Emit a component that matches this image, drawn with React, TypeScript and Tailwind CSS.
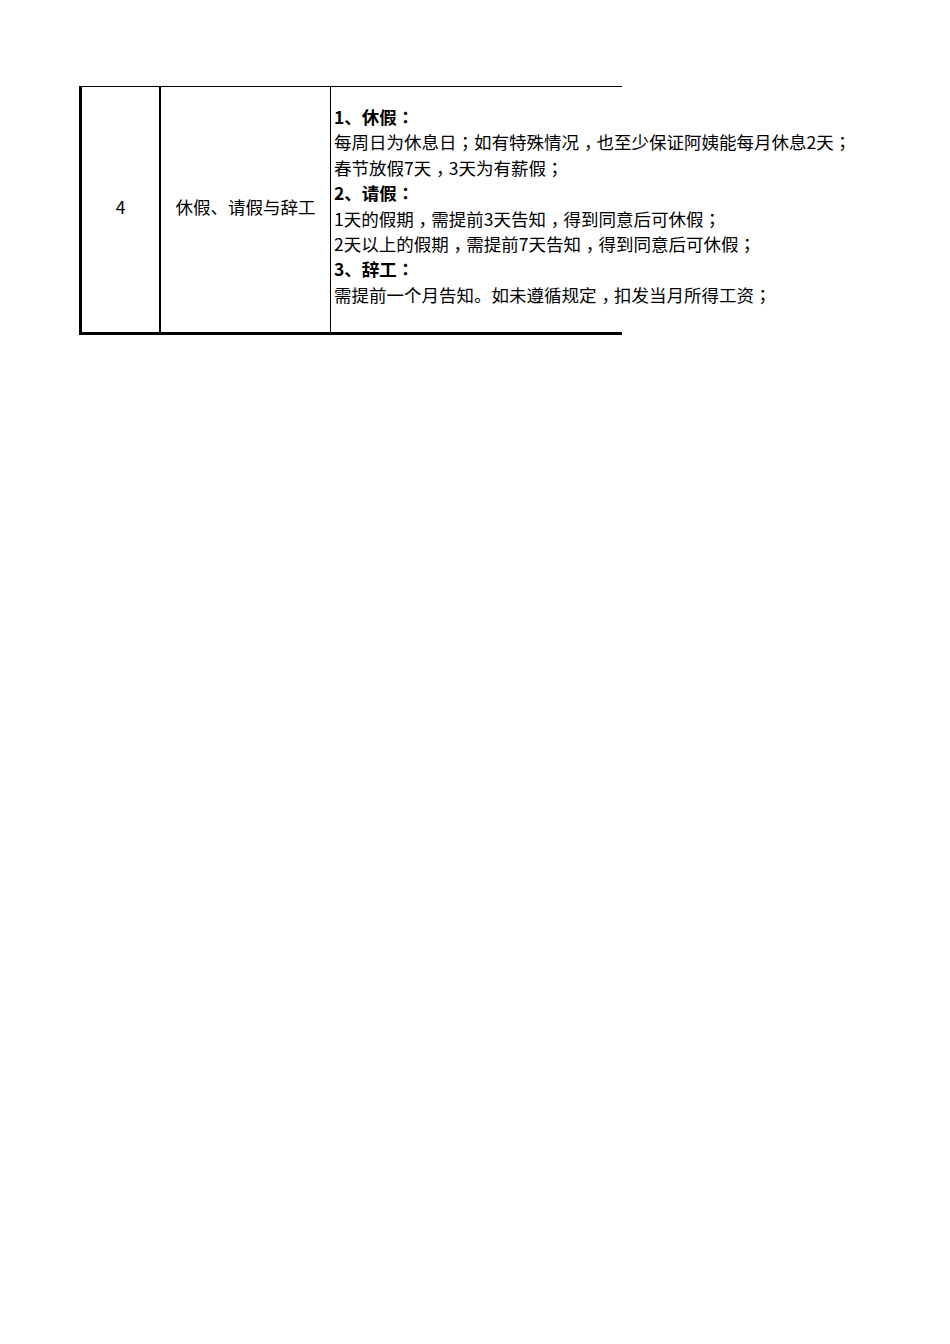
const PUNCT = /([，；：])/

// full-width punctuation sits centred in the reference
function Mark({ ch }: { ch: string }) {
  if (ch === "，") {
    return <span className="pl-[0.28em] mr-[-0.28em]">，</span>
  }
  return <span className="font-['Noto_Sans_CJK_TC',sans-serif]">{ch}</span>
}

function Line({ text, bold }: { text: string; bold?: boolean }) {
  return (
    <div className={bold ? "font-bold" : ""}>
      {text.split(PUNCT).map((part, i) =>
        PUNCT.test(part) ? <Mark key={i} ch={part} /> : <span key={i}>{part}</span>
      )}
    </div>
  )
}

export default function App() {
  const font = { fontFamily: '"Noto Sans CJK SC", "Noto Sans", sans-serif' }

  return (
    <div className="min-h-[1344px] w-[950px] bg-white text-black" style={font}>
      {/* Sheet row */}
      <div className="ml-[79px] pt-[86px]">
        <div className="flex h-[249px] w-[543px] border-t border-b-[3px] border-l-[3px] border-black">
          <div className="flex w-[79px] shrink-0 items-center justify-center border-r-2 border-black pb-1 text-[17.5px]">
            4
          </div>
          <div className="flex w-[170px] shrink-0 items-center justify-center border-r border-black pb-1 text-[17.5px] whitespace-nowrap">
            休假、请假与辞工
          </div>
          <div className="w-[291px] shrink-0 overflow-visible pt-[17px] pl-[3px] text-[17.5px] leading-[25.4px] whitespace-nowrap">
            <Line bold text="1、休假：" />
            <Line text="每周日为休息日；如有特殊情况，也至少保证阿姨能每月休息2天；" />
            <Line text="春节放假7天，3天为有薪假；" />
            <Line bold text="2、请假：" />
            <Line text="1天的假期，需提前3天告知，得到同意后可休假；" />
            <Line text="2天以上的假期，需提前7天告知，得到同意后可休假；" />
            <Line bold text="3、辞工：" />
            <Line text="需提前一个月告知。如未遵循规定，扣发当月所得工资；" />
          </div>
        </div>
      </div>
    </div>
  )
}
